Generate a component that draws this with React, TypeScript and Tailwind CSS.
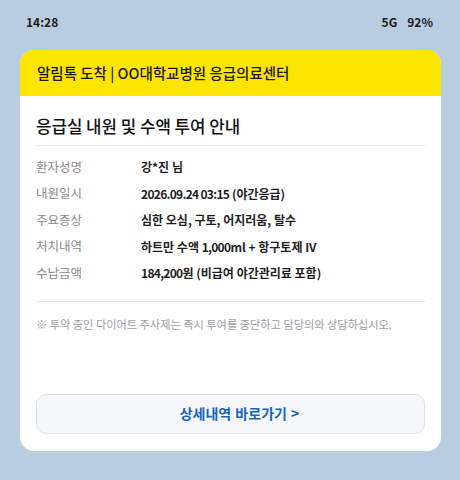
import React from "react";

const KR = { fontFamily: '"Noto Sans CJK KR", "Noto Sans", sans-serif' };

const rows: [string, string][] = [
  ["환자성명", "강*진 님"],
  ["내원일시", "2026.09.24 03:15 (야간응급)"],
  ["주요증상", "심한 오심, 구토, 어지러움, 탈수"],
  ["처치내역", "하트만 수액 1,000ml + 항구토제 IV"],
  ["수납금액", "184,200원 (비급여 야간관리료 포함)"],
];

function Val({ text }: { text: string }) {
  const parts = text.split(/([0-9][0-9.,: ]*[0-9])/);
  return (
    <>
      {parts.map((p, i) =>
        /^[0-9]/.test(p) ? (
          <span key={i} className="tracking-[-0.7px]">
            {p}
          </span>
        ) : (
          <span key={i}>{p}</span>
        )
      )}
    </>
  );
}

export default function App() {
  return (
    <div className="w-[460px] h-[480px] bg-[#b9cde1] overflow-hidden" style={KR}>
      <div className="flex justify-between items-center h-[16px] mt-[14px] pl-[26px] pr-[27px] text-[12px] font-bold text-[#1c1c1c]">
        <span>14:28</span>
        <span className="flex gap-[10px]">
          <span>5G</span>
          <span>92%</span>
        </span>
      </div>
      <div className="ml-[20px] mt-[20px] w-[421px] h-[401px] bg-white rounded-[14px] overflow-hidden flex flex-col">
        <div className="h-[46px] bg-[#fee500] flex items-center pl-[17px] text-[14.5px] font-medium text-[#1a1a1a]">
          알림톡 도착 | OO대학교병원 응급의료센터
        </div>
        <div className="px-[16px] flex flex-col flex-1">
          <div className="pt-[18px] pb-[6px] leading-[25px] text-[16.8px] font-medium text-[#111] border-b border-[#e3e5e8]">
            응급실 내원 및 수액 투여 안내
          </div>
          <div className="pt-[8px] pb-[14px] flex flex-col border-b border-[#e3e5e8]">
            {rows.map(([k, v]) => (
              <div key={k} className="flex h-[26.5px] items-center">
                <span className="w-[105px] text-[12.5px] text-[#8a8a8a]">{k}</span>
                <span className="text-[12px] font-semibold text-[#1e1e1e]">
                  <Val text={v} />
                </span>
              </div>
            ))}
          </div>
          <div className="pt-[14px] leading-[16px] text-[11.2px] text-[#9a9ea3]">
            ※ 투약 중인 다이어트 주사제는 즉시 투여를 중단하고 담당의와 상담하십시오.
          </div>
          <div className="mt-[62px] h-[40px] rounded-[10px] border border-[#dde2e8] bg-[#f5f7fa] flex items-center justify-center pl-[18px] text-[14px] font-semibold text-[#1764b8] [word-spacing:1px]">
            상세내역 바로가기 &gt;
          </div>
        </div>
      </div>
    </div>
  );
}
